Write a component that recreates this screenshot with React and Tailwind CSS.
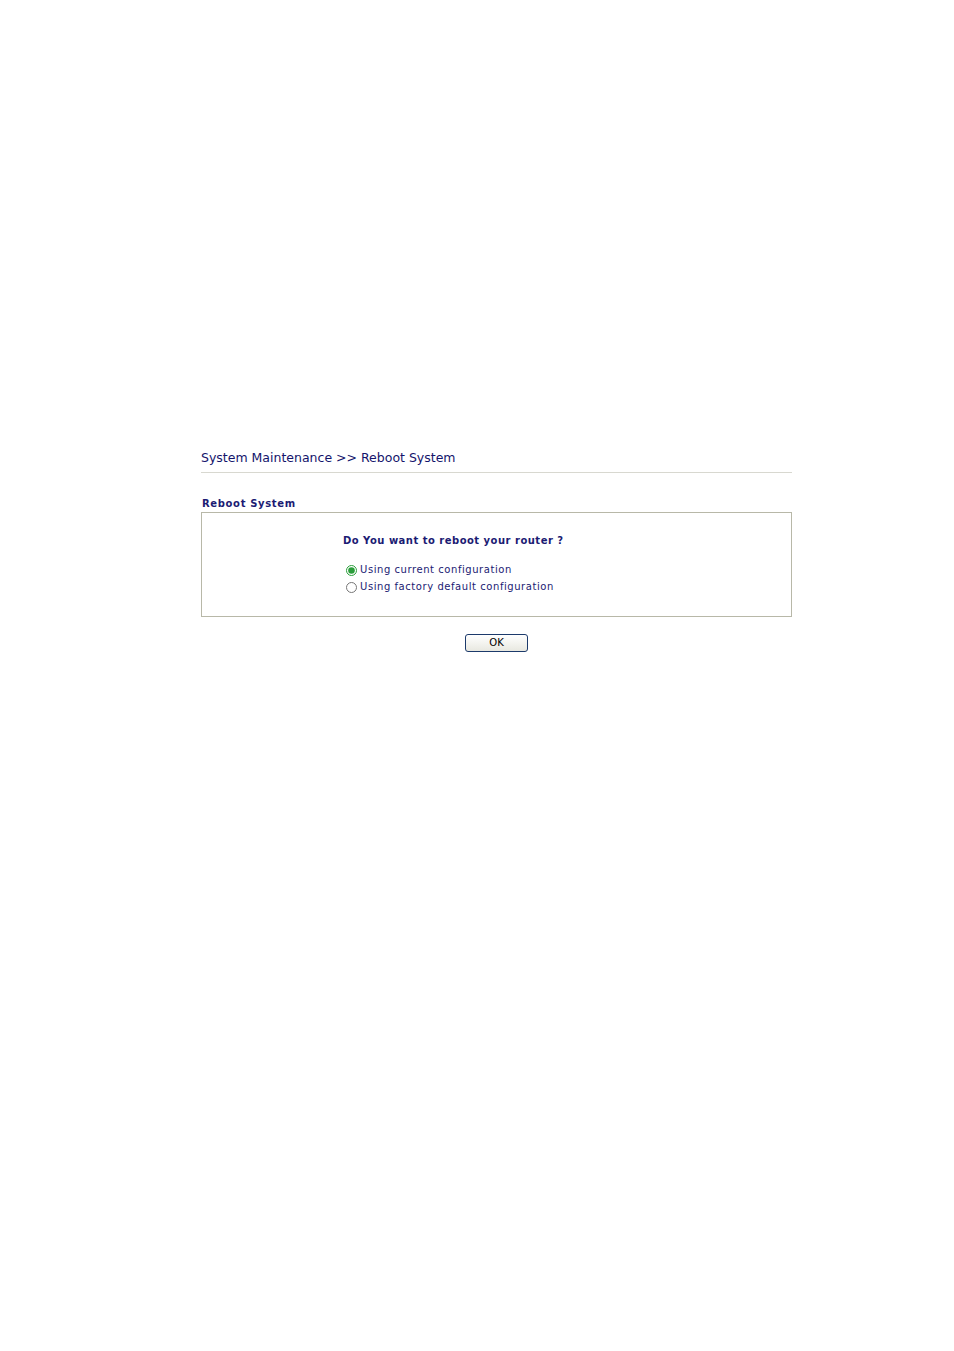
import React, { useState } from 'react';

function App() {
  const [mode, setMode] = useState('current');

  return (
    <div className="min-h-[1351px] bg-white font-['DejaVu_Sans',sans-serif]">
      <div className="w-[591px] ml-[201px] pt-[450px]">
        {/* Header */}
        <h1 className="text-[12.5px] leading-[16px] text-[#14146b] pb-[6px] border-b border-[#d8d8d0]">
          System Maintenance &gt;&gt; Reboot System
        </h1>

        <div className="mt-[25px] text-[10px] leading-[12px] font-bold text-[#1b1b73] pl-[1px] tracking-[0.65px]">
          Reboot System
        </div>

        {/* Box */}
        <div className="mt-[2px] h-[105px] border border-[#b8b8a8] pt-[22px] pl-[141px]">
          <div className="text-[10px] leading-[12px] font-bold text-[#1b1b73] tracking-[0.49px]">
            Do You want to reboot your router ?
          </div>
          <div className="mt-[17px] flex flex-col gap-[5px] text-[10px] leading-[12px] text-[#1b1b73] tracking-[0.56px]">
            <label className="flex items-center gap-[3px] pl-[3px]">
              <input
                type="radio"
                name="mode"
                checked={mode === 'current'}
                onChange={() => setMode('current')}
                className="m-0 w-[11px] h-[11px] accent-[#2a9d3a]"
              />
              Using current configuration
            </label>
            <label className="flex items-center gap-[3px] pl-[3px]">
              <input
                type="radio"
                name="mode"
                checked={mode === 'factory'}
                onChange={() => setMode('factory')}
                className="m-0 w-[11px] h-[11px] accent-[#2a9d3a]"
              />
              Using factory default configuration
            </label>
          </div>
        </div>

        {/* OK button */}
        <div className="mt-[17px] flex justify-center">
          <button className="w-[63px] h-[18px] border border-[#1c3a6b] rounded-[3px] bg-gradient-to-b from-white to-[#e8e8e0] text-[10px] leading-[12px] text-black font-['DejaVu_Sans',sans-serif]">
            OK
          </button>
        </div>
      </div>
    </div>
  );
}

export default App;
